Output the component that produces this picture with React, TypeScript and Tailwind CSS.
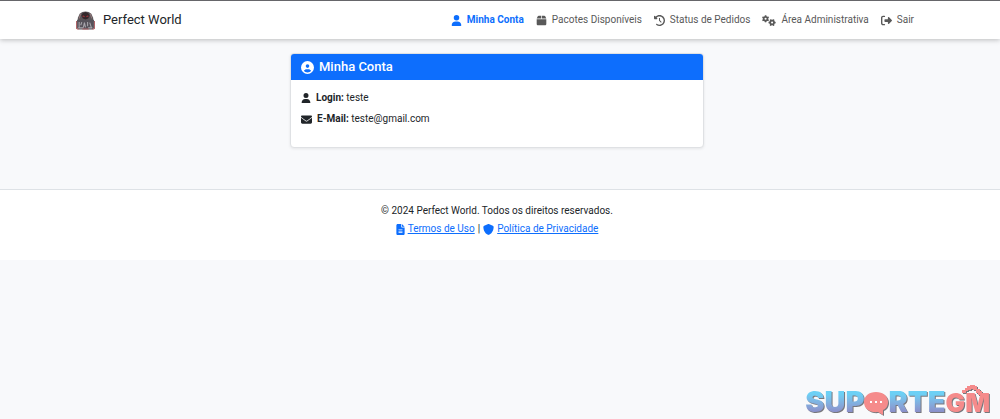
import React from "react";
import {
  FaBox,
  FaCircleUser,
  FaClockRotateLeft,
  FaEnvelope,
  FaFileLines,
  FaGears,
  FaRightFromBracket,
  FaShield,
  FaUser,
} from "react-icons/fa6";

const BrandLogo = () => (
  <svg viewBox="0 0 36 36" className="h-[19px] w-[19px]" aria-hidden="true">
    <path d="M7 5 L12 2 L18 1 L24 2 L29 5 L32 12 L34 20 L2 20 L4 12 Z" fill="#5b565a" />
    <path d="M13 4 L18 2 L23 4 L26 9 L23 14 L18 16 L13 14 L10 9 Z" fill="#33282b" />
    <path d="M13 8 L17 10 L16 12 L12 11 Z M23 8 L19 10 L20 12 L24 11 Z" fill="#8f3238" />
    <path d="M9 5 L6 14 M27 5 L30 14" stroke="#94797b" strokeWidth="2" />
    <path d="M2 17 H34 V33 L30 35 H6 L2 33 Z" fill="#56525a" />
    <path
      d="M6 21 V31 M11 21 L9 27 M14 31 L16 22 L18 31 M22 21 V29 M26 22 L29 31 M4 32 H14 M23 32 H31"
      stroke="#a9a6ad"
      strokeWidth="2"
      fill="none"
    />
    <path d="M1 19 V33 L5 35 M35 19 V33 L31 35 M12 34 H24" stroke="#b06468" strokeWidth="2" fill="none" />
  </svg>
);

const SupportLogo = () => (
  <div
    className="absolute right-[10px] bottom-0 flex items-baseline font-['Inter',sans-serif] text-[29px] leading-8 font-black drop-shadow-[1px_1px_0px_#77777c]"
    aria-label="SuporteGM"
  >
    <span className="bg-linear-to-b from-[#6cd0f5] from-25% to-[#8b91cb] to-80% bg-clip-text text-transparent">
      SUP
    </span>
    <svg viewBox="0 0 24 23" className="h-[23px] w-6 self-end mb-[4px]" aria-hidden="true">
      <path
        d="M12 0 C19 0 24 4 24 10 C24 14 22 17 19 18 L19 23 L14 20 C6 21 0 17 0 10 C0 4 5 0 12 0 Z"
        fill="#f58b8b"
      />
      <path d="M6 9 h2 v2 h-2 z M11 9 h2 v2 h-2 z M16 9 h2 v2 h-2 z" fill="#fff" />
    </svg>
    <span className="bg-linear-to-b from-[#6cd0f5] from-25% to-[#8b91cb] to-80% bg-clip-text text-transparent">
      RTE
    </span>
    <span className="relative text-[26px] text-[#f58b8b]">
      GM
      <svg
        viewBox="0 0 16 8"
        className="absolute -top-[2px] right-2 h-[10px] w-5"
        shapeRendering="crispEdges"
        aria-hidden="true"
      >
        <path
          d="M6 0 H10 V1 H12 V3 H14 V5 H16 V8 H13 V6 H11 V4 H9 V3 H7 V4 H5 V5 H3 V6 H0 V4 H2 V2 H4 V1 H6 Z"
          fill="#f58b8b"
        />
      </svg>
    </span>
  </div>
);

const navItems = [
  { label: "Minha Conta", icon: FaUser, iconClass: "h-[11px] w-[11px]", active: true },
  { label: "Pacotes Disponíveis", icon: FaBox, iconClass: "h-[11px] w-[11px]" },
  { label: "Status de Pedidos", icon: FaClockRotateLeft, iconClass: "h-[11px] w-[11px]" },
  { label: "Área Administrativa", icon: FaGears, iconClass: "h-[11px] w-[14px]" },
  { label: "Sair", icon: FaRightFromBracket, iconClass: "h-[11px] w-[11px]" },
];

const App = () => {
  return (
    <div className="relative min-h-screen bg-[#f8f9fb] font-['Roboto',sans-serif] text-[10px] leading-4 text-[#212529]">
      <header className="border-t border-[#66666a] bg-white pr-[6px] shadow-[0_1px_5px_rgba(0,0,0,0.25)]">
        <div className="mx-auto flex h-[38px] max-w-[858px] items-center justify-between px-2">
          <a href="#" className="flex items-center gap-2 text-[13px]">
            <BrandLogo />
            Perfect World
          </a>
          <nav className="flex gap-3 pr-1">
            {navItems.map(({ label, icon: Icon, iconClass, active }) => (
              <a
                key={label}
                href="#"
                className={
                  active
                    ? "flex items-center gap-[5px] font-bold text-[#0d6efd]"
                    : "flex items-center gap-[5px] text-[#595959]"
                }
              >
                <Icon className={iconClass} />
                {label}
              </a>
            ))}
          </nav>
        </div>
      </header>

      <main className="pt-[14px] pr-[6px] pb-[41px]">
        <section className="mx-auto max-w-[414px] overflow-hidden rounded border border-[#dfe1e4] bg-white shadow-[0_1px_3px_rgba(0,0,0,0.08)]">
          <h1 className="flex h-[26px] items-center gap-[5px] bg-[#0d6efd] px-[10px] text-[13px] font-medium text-white">
            <FaCircleUser />
            Minha Conta
          </h1>
          <div className="flex h-[67px] flex-col gap-[5px] px-[10px] pt-[10px]">
            <p className="flex items-center gap-[5px]">
              <FaUser className="h-[10px] w-[10px]" />
              <span>
                <strong>Login:</strong> teste
              </span>
            </p>
            <p className="flex items-center gap-[5px]">
              <FaEnvelope className="h-[11px] w-[11px]" />
              <span>
                <strong>E-Mail:</strong> teste@gmail.com
              </span>
            </p>
          </div>
        </section>
      </main>

      <footer className="border-t border-[#dee2e6] bg-white pt-3 pr-[6px] pb-[22px] text-center leading-[18px]">
        <p>© 2024 Perfect World. Todos os direitos reservados.</p>
        <p className="flex items-center justify-center gap-[3px]">
          <FaFileLines className="h-[11px] w-[9px] text-[#0d6efd]" />
          <a href="#" className="text-[#0d6efd] underline">
            Termos de Uso
          </a>
          |
          <FaShield className="h-[11px] w-[11px] text-[#0d6efd]" />
          <a href="#" className="text-[#0d6efd] underline">
            Política de Privacidade
          </a>
        </p>
      </footer>

      <SupportLogo />
    </div>
  );
};

export default App;
